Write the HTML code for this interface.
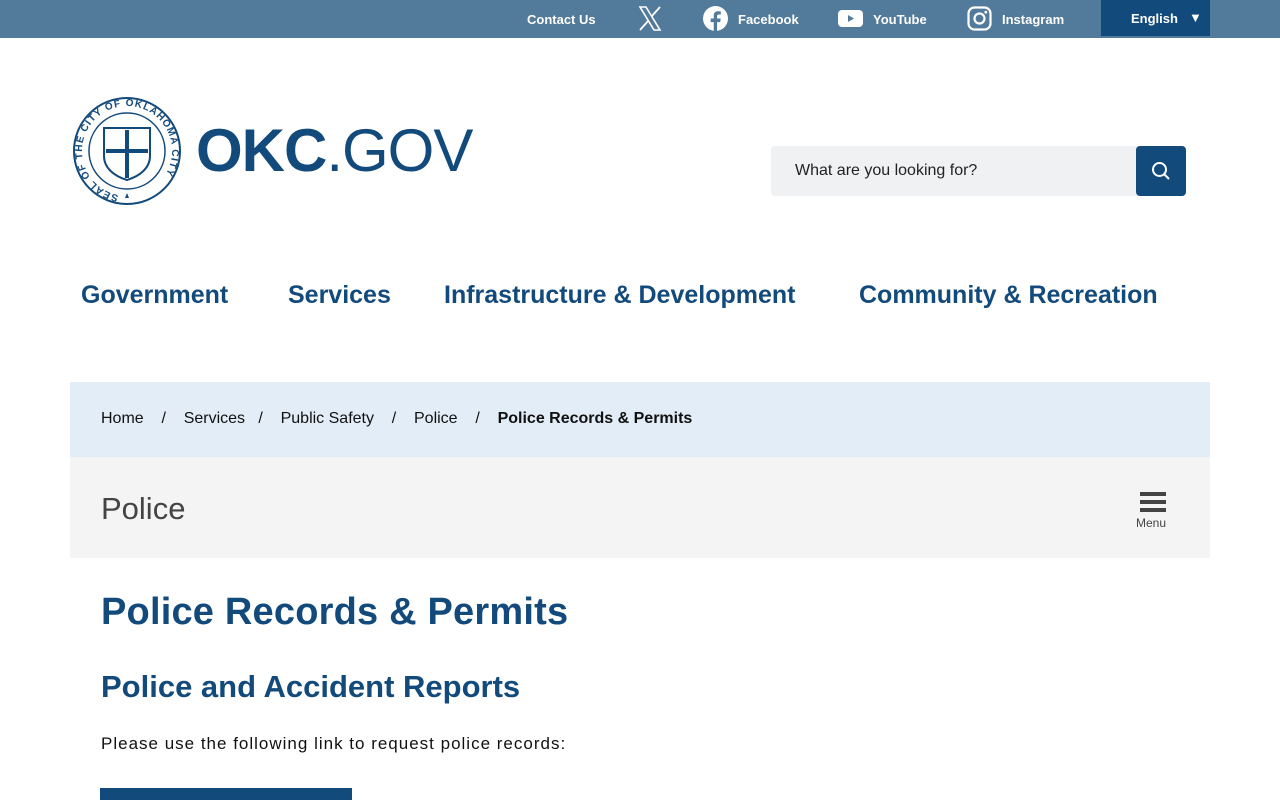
<!DOCTYPE html>
<html><head><meta charset="utf-8"><style>
*{margin:0;padding:0;box-sizing:border-box}
html,body{width:1280px;height:800px;overflow:hidden}
body{background:#fff;font-family:"Liberation Sans",sans-serif;color:#111;position:relative}
.top{position:absolute;top:0;left:0;width:1280px;height:38px;background:#527a9b;color:#fff;font-size:13px;font-weight:bold}
.top span{position:absolute;top:12px}
.lang{position:absolute;left:1101px;top:0;width:109px;height:36px;background:#134a7c}
.blue{color:#134a7c}
.nav{position:absolute;top:281px;font-size:25px;font-weight:bold;color:#134a7c}
</style></head><body>
<div class="top">
<span style="left:527px">Contact Us</span>
<svg style="position:absolute;left:638px;top:6px" width="24" height="25" viewBox="0 0 24 25"><path d="M2 1h6l14 23h-6z" fill="none" stroke="#fff" stroke-width="1.6"/><path d="M22 1L13.5 10.5M2 24l8.5-9.5" stroke="#fff" stroke-width="1.8"/></svg>
<svg style="position:absolute;left:703px;top:6px" width="25" height="25" viewBox="0 0 24 24"><circle cx="12" cy="12" r="12" fill="#fff"/><path d="M13.5 24v-8.5h3l.5-3.5h-3.5V10c0-1 .4-1.8 1.9-1.8h1.7V5.2c-.5-.1-1.5-.2-2.6-.2-2.6 0-4.2 1.5-4.2 4.3V12H7.3v3.5h3V24z" fill="#527a9b"/></svg>
<span style="left:738px">Facebook</span>
<svg style="position:absolute;left:838px;top:10px" width="25" height="17" viewBox="0 0 25 17"><rect width="25" height="17" rx="4" fill="#fff"/><path d="M10 5l6 3.5-6 3.5z" fill="#527a9b"/></svg>
<span style="left:873px">YouTube</span>
<svg style="position:absolute;left:967px;top:6px" width="25" height="25" viewBox="0 0 25 25"><rect x="1.5" y="1.5" width="22" height="22" rx="6" fill="none" stroke="#fff" stroke-width="2.2"/><circle cx="12.5" cy="12.5" r="5" fill="none" stroke="#fff" stroke-width="2.2"/><circle cx="18.8" cy="6.2" r="1.4" fill="#fff"/></svg>
<span style="left:1002px">Instagram</span>
<div class="lang"><span style="left:30px;top:11px">English</span><span style="left:88px;top:10px;font-size:13px">▼</span></div>
</div>
<svg style="position:absolute;left:72px;top:96px" width="110" height="110" viewBox="0 0 110 110"><defs><path id="ring" d="M55 100A45 45 0 1 1 55.1 100"/></defs><circle cx="55" cy="55" r="53" fill="none" stroke="#134a7c" stroke-width="2"/><circle cx="55" cy="55" r="38" fill="none" stroke="#134a7c" stroke-width="1.5"/><text font-size="10" fill="#134a7c" font-weight="bold" letter-spacing="1"><textPath href="#ring" startOffset="3%">SEAL OF THE CITY OF OKLAHOMA CITY</textPath></text><path d="M32 32h46v28c0 12-10 20-23 24-13-4-23-12-23-24z" fill="none" stroke="#134a7c" stroke-width="2"/><path d="M55 34v48M34 55h42" stroke="#134a7c" stroke-width="4"/><path d="M55 97l2 5h-4z" fill="#134a7c"/></svg>
<div class="blue" style="position:absolute;left:196px;top:116px;font-size:60px;letter-spacing:-1px"><b>OKC</b>.GOV</div>
<div style="position:absolute;left:771px;top:146px;width:366px;height:50px;background:#eff1f2;border-radius:4px 0 0 4px;font-size:16px;padding:16px 24px;color:#222">What are you looking for?</div>
<div style="position:absolute;left:1136px;top:146px;width:50px;height:50px;background:#134a7c;border-radius:4px"><svg style="position:absolute;left:15px;top:15px" width="20" height="20" viewBox="0 0 20 20"><circle cx="8.5" cy="8.5" r="6.5" fill="none" stroke="#fff" stroke-width="2"/><path d="M13.5 13.5L18 18" stroke="#fff" stroke-width="2"/></svg></div>
<div class="nav" style="left:81px">Government</div>
<div class="nav" style="left:288px">Services</div>
<div class="nav" style="left:444px">Infrastructure &amp; Development</div>
<div class="nav" style="left:859px">Community &amp; Recreation</div>
<div style="position:absolute;left:70px;top:382px;width:1140px;height:75px;background:#e3edf7;font-size:16px;padding:28px 31px;white-space:pre">Home    /    Services   /    Public Safety    /    Police    /    <b>Police Records &amp; Permits</b></div>
<div style="position:absolute;left:70px;top:457px;width:1140px;height:101px;background:#f4f4f4">
<div style="position:absolute;left:31px;top:34px;font-size:31px;color:#444">Police</div>
<div style="position:absolute;left:1070px;top:35px;width:26px;height:4px;background:#444;box-shadow:0 8px 0 #444,0 16px 0 #444"></div>
<div style="position:absolute;left:1066px;top:59px;font-size:12px;color:#444">Menu</div>
</div>
<div class="blue" style="position:absolute;left:101px;top:591px;font-size:38px;font-weight:bold;letter-spacing:0.2px">Police Records &amp; Permits</div>
<div class="blue" style="position:absolute;left:101px;top:669px;font-size:31px;font-weight:bold">Police and Accident Reports</div>
<div style="position:absolute;left:101px;top:734px;font-size:17px;letter-spacing:1px">Please use the following link to request police records:</div>
<div style="position:absolute;left:100px;top:788px;width:252px;height:12px;background:#134a7c"></div>
</body></html>
